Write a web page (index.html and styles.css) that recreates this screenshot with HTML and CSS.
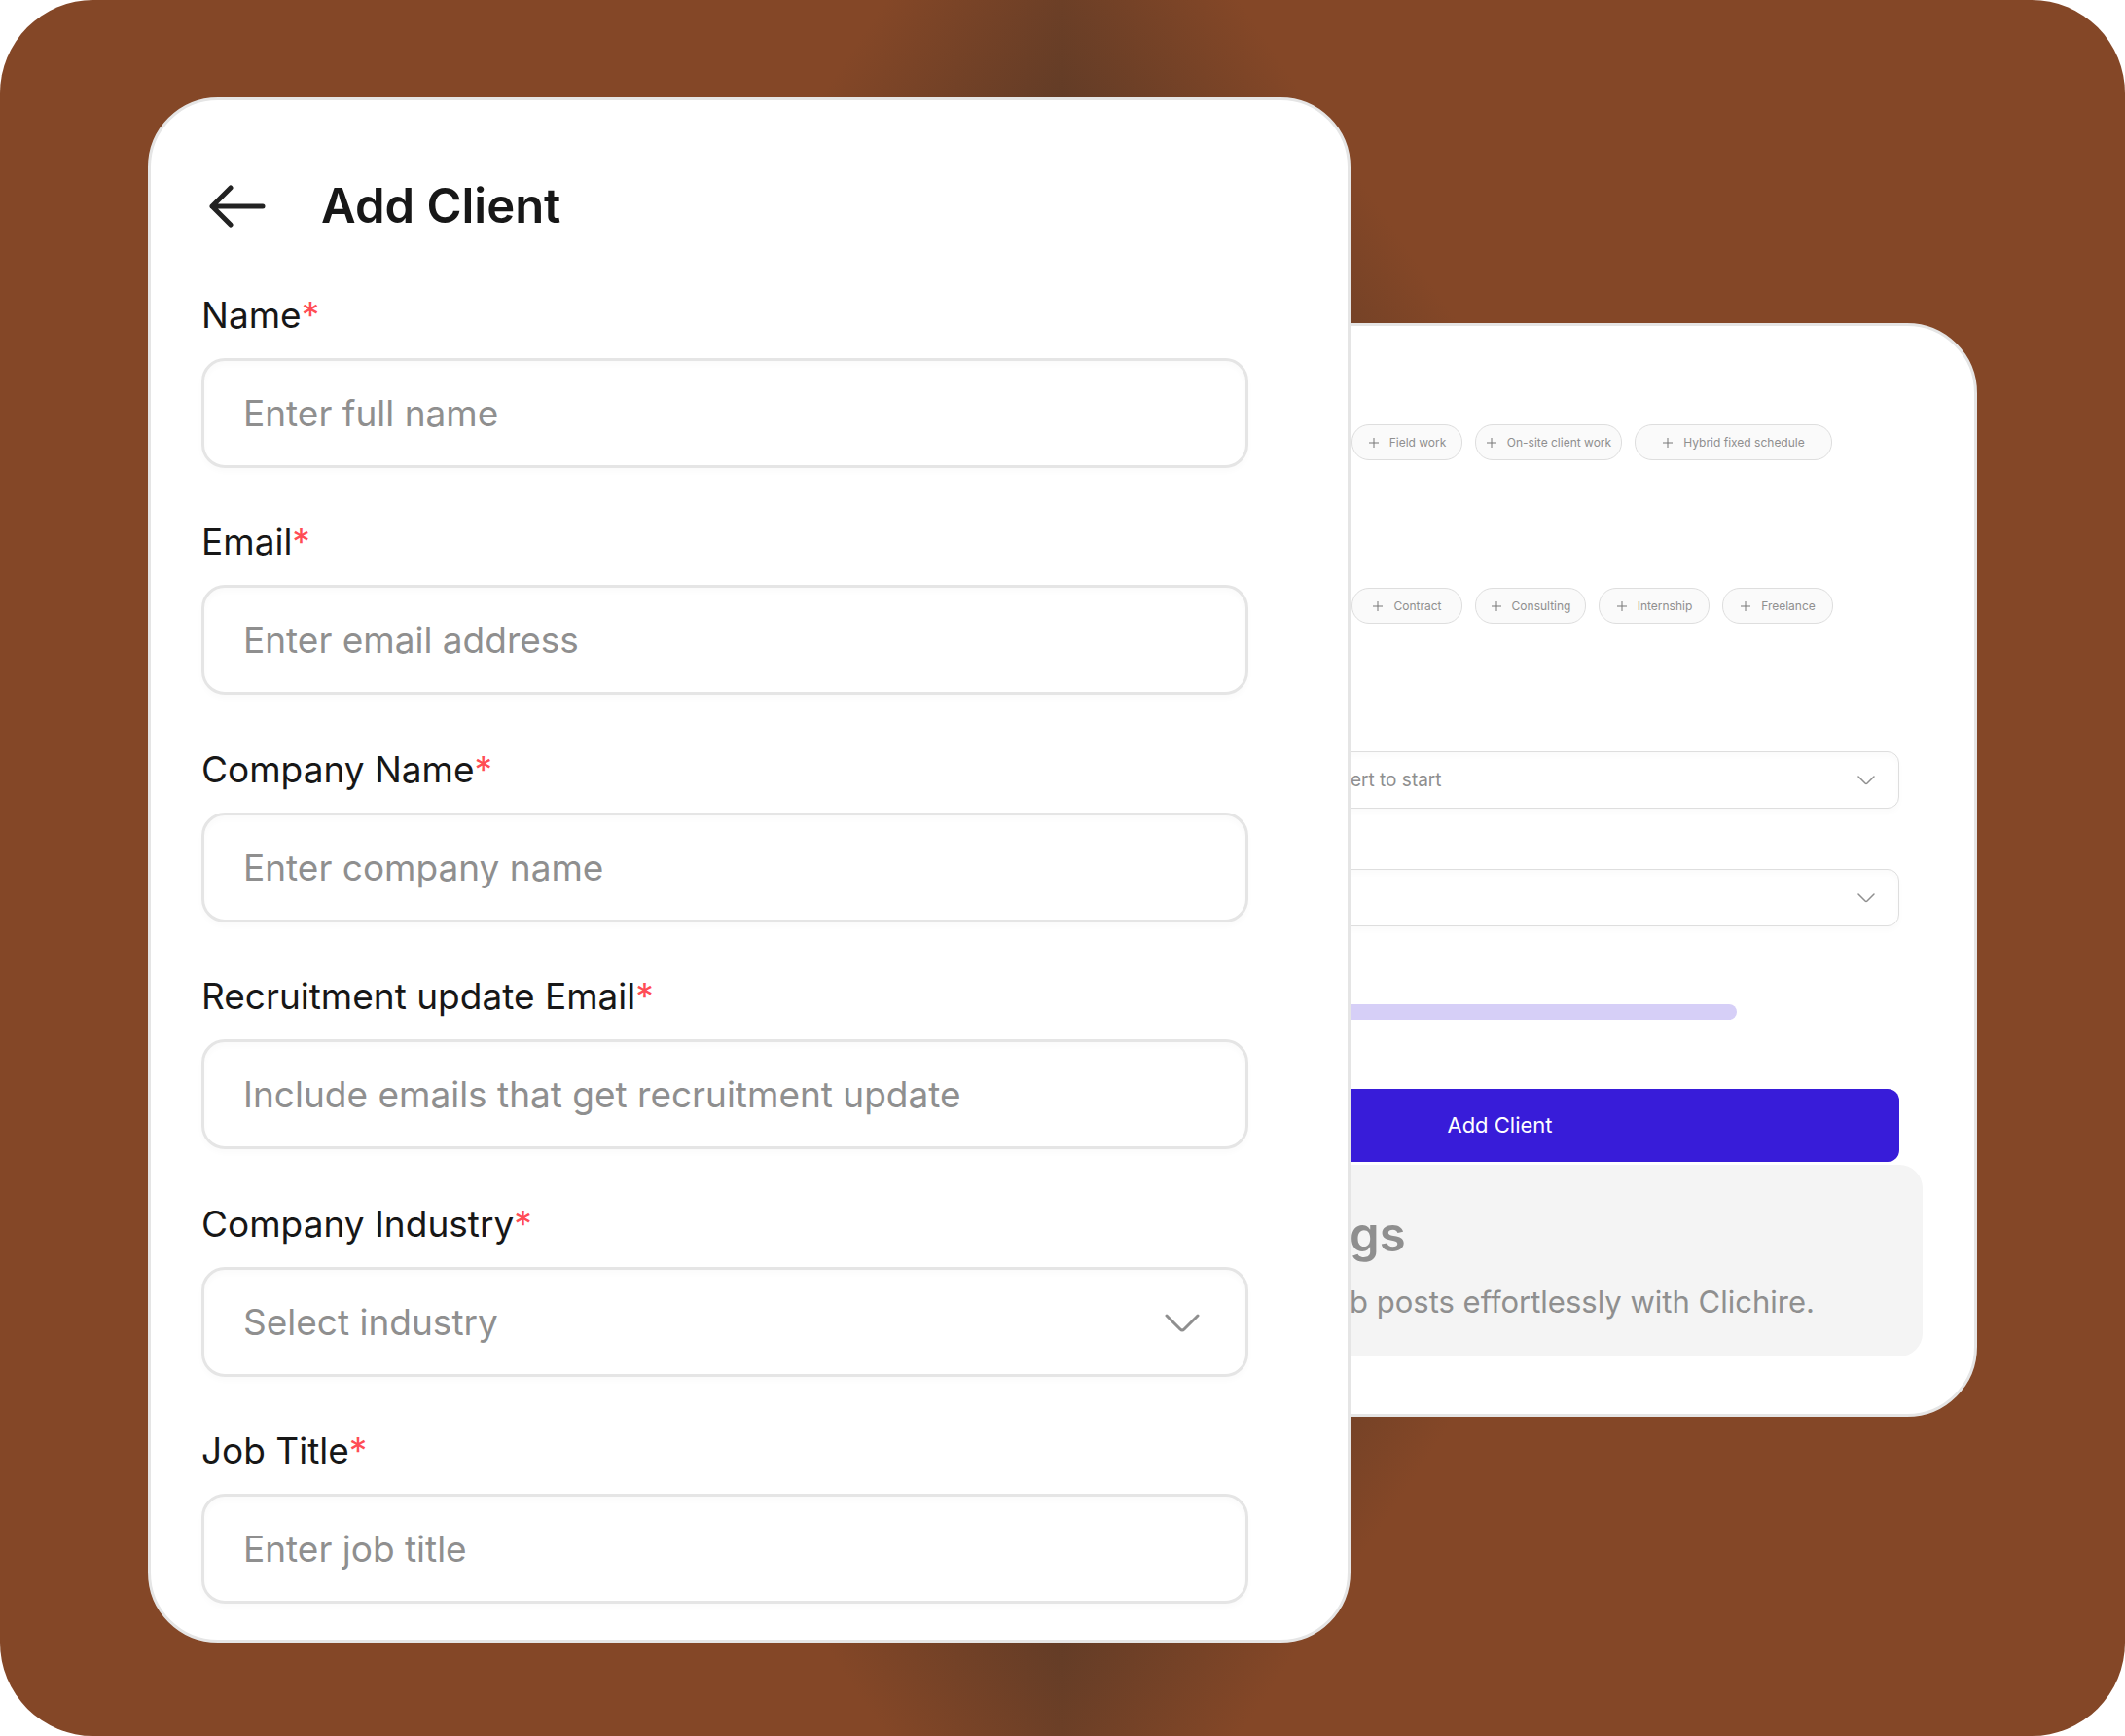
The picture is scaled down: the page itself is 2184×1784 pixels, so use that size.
FILE: index.html
```html
<!DOCTYPE html>
<html lang="en">
<head>
  <meta charset="utf-8">
  <meta name="viewport" content="width=device-width, initial-scale=1">
  <title>Add Client</title>
  <link rel="stylesheet" href="styles.css">
</head>
<body>
  <main class="stage">
    <section class="card card-front">
      <header class="card-header">
        <button class="back-button" type="button" aria-label="Back">
          <svg class="icon-arrow" viewBox="0 0 58 44" aria-hidden="true"><path d="M22 3 3 22l19 19M3 22h52"/></svg>
        </button>
        <h1 class="title">Add Client</h1>
      </header>
      <form class="client-form">
        <div class="field">
          <label class="label" for="name">Name<span class="required">*</span></label>
          <input class="control" id="name" type="text" placeholder="Enter full name">
        </div>
        <div class="field">
          <label class="label" for="email">Email<span class="required">*</span></label>
          <input class="control" id="email" type="email" placeholder="Enter email address">
        </div>
        <div class="field">
          <label class="label" for="company">Company Name<span class="required">*</span></label>
          <input class="control" id="company" type="text" placeholder="Enter company name">
        </div>
        <div class="field">
          <label class="label" for="updates">Recruitment update Email<span class="required">*</span></label>
          <input class="control" id="updates" type="text" placeholder="Include emails that get recruitment update">
        </div>
        <div class="field">
          <label class="label" for="industry">Company Industry<span class="required">*</span></label>
          <div class="select-wrap">
            <select class="control" id="industry"><option>Select industry</option></select>
            <svg class="chevron" viewBox="0 0 36 20" aria-hidden="true"><path d="M2 2l14 14q2 2 4 0L34 2"/></svg>
          </div>
        </div>
        <div class="field">
          <label class="label" for="job">Job Title<span class="required">*</span></label>
          <input class="control" id="job" type="text" placeholder="Enter job title">
        </div>
      </form>
    </section>

    <section class="card card-rear">
      <form class="rear-form">
        <div class="chips">
          <button class="chip" type="button"><svg class="plus" viewBox="0 0 12 12" aria-hidden="true"><path d="M6 1v10M1 6h10"/></svg>Field work</button>
          <button class="chip chip-medium" type="button"><svg class="plus" viewBox="0 0 12 12" aria-hidden="true"><path d="M6 1v10M1 6h10"/></svg>On-site client work</button>
          <button class="chip chip-wide" type="button"><svg class="plus" viewBox="0 0 12 12" aria-hidden="true"><path d="M6 1v10M1 6h10"/></svg>Hybrid fixed schedule</button>
        </div>
        <div class="chips">
          <button class="chip" type="button"><svg class="plus" viewBox="0 0 12 12" aria-hidden="true"><path d="M6 1v10M1 6h10"/></svg>Contract</button>
          <button class="chip" type="button"><svg class="plus" viewBox="0 0 12 12" aria-hidden="true"><path d="M6 1v10M1 6h10"/></svg>Consulting</button>
          <button class="chip" type="button"><svg class="plus" viewBox="0 0 12 12" aria-hidden="true"><path d="M6 1v10M1 6h10"/></svg>Internship</button>
          <button class="chip" type="button"><svg class="plus" viewBox="0 0 12 12" aria-hidden="true"><path d="M6 1v10M1 6h10"/></svg>Freelance</button>
        </div>
        <div class="selects">
          <div class="select-wrap">
            <select class="control control-small" aria-label="Start"><option>ert to start</option></select>
            <svg class="chevron chevron-small" viewBox="0 0 36 20" aria-hidden="true"><path d="M2 2l14 14q2 2 4 0L34 2"/></svg>
          </div>
          <div class="select-wrap">
            <select class="control control-small" aria-label="Option"><option></option></select>
            <svg class="chevron chevron-small" viewBox="0 0 36 20" aria-hidden="true"><path d="M2 2l14 14q2 2 4 0L34 2"/></svg>
          </div>
        </div>
        <div class="track"></div>
        <button class="submit" type="button">Add Client</button>
      </form>
      <div class="note">
        <h2 class="note-title">gs</h2>
        <p class="note-text">b posts effortlessly with Clichire.</p>
      </div>
    </section>
  </main>
</body>
</html>
```

FILE: styles.css
```css
:root {
  --brown: #844727;
  --shade: #1c2526;
  --line: #e5e5e5;
  --ink: #171717;
  --muted: #8f8f8f;
  --tuck: 311px;
}

* {
  box-sizing: border-box;
}

body {
  margin: 0;
  background: #fff;
  color: var(--ink);
  font-family: Inter, "Liberation Sans", sans-serif;
}

button,
input,
select {
  font: inherit;
}

.stage {
  position: relative;
  display: grid;
  grid-template-columns: minmax(0, 1236fr) minmax(0, 644fr);
  min-height: 100vh;
  padding: 100px 152px 96px;
  overflow: hidden;
  border-radius: 96px;
  background: var(--brown);
}

/* Diamond-shaped shade behind the cards */
.stage::before {
  content: "";
  position: absolute;
  left: 14%;
  top: -15%;
  width: 72%;
  height: 130%;
  background:
    linear-gradient(to bottom right, var(--shade), var(--brown) 50%) bottom right / 50% 50% no-repeat,
    linear-gradient(to bottom left, var(--shade), var(--brown) 50%) bottom left / 50% 50% no-repeat,
    linear-gradient(to top left, var(--shade), var(--brown) 50%) top left / 50% 50% no-repeat,
    linear-gradient(to top right, var(--shade), var(--brown) 50%) top right / 50% 50% no-repeat;
}

.card {
  display: flex;
  flex-direction: column;
  border: 3px solid var(--line);
  border-radius: 72px;
  background: #fff;
}

.card-front {
  z-index: 2;
  padding: 76px 102px 37px 52px;
}

.card-rear {
  z-index: 1;
  align-self: center;
  margin-left: calc(-1 * var(--tuck));
  padding: 101px 53px 59px 51px;
}

.card-header {
  display: flex;
  align-items: center;
  gap: 57px;
  height: 65px;
  padding-left: 8px;
}

.back-button {
  display: flex;
  padding: 0;
  border: 0;
  background: none;
}

.icon-arrow {
  width: 58px;
  height: 44px;
  fill: none;
  stroke: #222;
  stroke-width: 5;
  stroke-linecap: round;
  stroke-linejoin: round;
}

.title {
  margin: 0;
  font-size: 49px;
  line-height: 65px;
  font-weight: 600;
}

.client-form {
  display: flex;
  flex: 1;
  flex-direction: column;
  justify-content: space-between;
  gap: 32px;
  padding-top: 58px;
}

.field {
  display: flex;
  flex-direction: column;
  gap: 22px;
}

.label {
  font-size: 37px;
  line-height: 44px;
}

.required {
  color: #ff4d55;
}

.control {
  width: 100%;
  height: 113px;
  padding: 0 40px;
  border: 3px solid var(--line);
  border-radius: 24px;
  outline: 0;
  background: #fff;
  box-shadow: 0 4px 6px rgb(0 0 0 / 2%), inset 0 4px 6px rgb(0 0 0 / 2%);
  color: var(--muted);
  font-size: 37px;
  appearance: none;
}

.control::placeholder {
  color: var(--muted);
  opacity: 1;
}

.select-wrap {
  position: relative;
}

.chevron {
  position: absolute;
  top: 48px;
  right: 50px;
  width: 36px;
  height: 20px;
  fill: none;
  stroke: var(--muted);
  stroke-width: 3;
  stroke-linecap: round;
  pointer-events: none;
}

.rear-form {
  display: flex;
  flex-direction: column;
  padding-right: 24px;
}

.chips {
  display: flex;
  gap: 13px;
  margin-bottom: 131px;
  padding-left: 258px;
}

.chip {
  display: flex;
  align-items: center;
  justify-content: center;
  gap: 10px;
  width: 114px;
  height: 37px;
  padding: 0;
  border: 1px solid #dedede;
  border-radius: 18px;
  background: #fafafa;
  color: var(--muted);
  font-size: 12px;
  white-space: nowrap;
}

.chip-medium {
  width: 151px;
}

.chip-wide {
  width: 203px;
}

.plus {
  width: 12px;
  height: 12px;
  fill: none;
  stroke: #777;
}

.selects {
  display: grid;
  gap: 62px;
}

.control-small {
  display: block;
  height: 59px;
  padding: 0 40px 0 256px;
  border: 1px solid #dedede;
  border-radius: 12px;
  font-size: 19px;
}

.chevron-small {
  top: 25px;
  right: 25px;
  width: 18px;
  height: 10px;
}

.track {
  height: 16px;
  margin: 80px 167px 71px 0;
  border-radius: 8px;
  background: #d6cff7;
}

.submit {
  height: 75px;
  padding: 0 0 2px;
  border: 0;
  border-radius: 12px;
  background: #381cd9;
  color: #fff;
  font-size: 22px;
}

.note {
  margin-top: 3px;
  padding: 40px 40px 30px 256px;
  border-radius: 24px;
  background: #f4f4f4;
  color: var(--muted);
}

.note-title {
  margin: 0;
  font-size: 49px;
  line-height: 64px;
  font-weight: 600;
}

.note-text {
  margin: 11px 0 0;
  font-size: 31px;
  line-height: 52px;
}
```
